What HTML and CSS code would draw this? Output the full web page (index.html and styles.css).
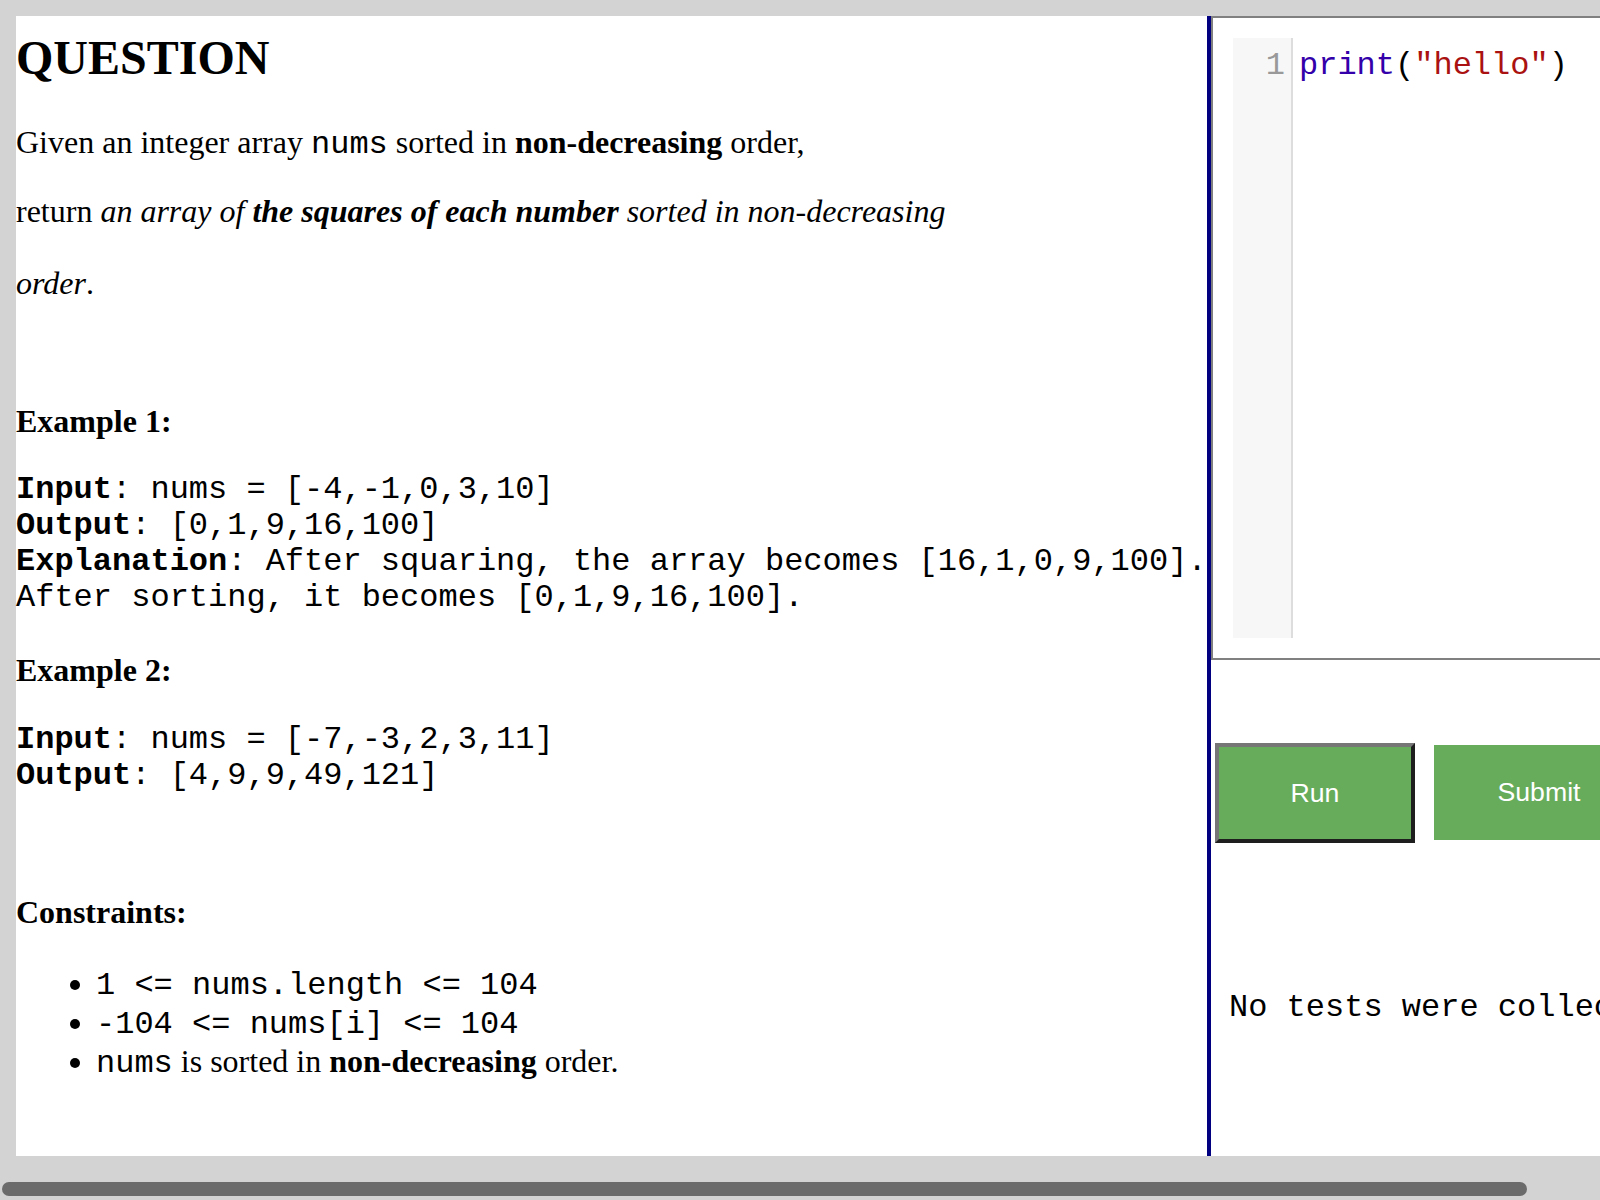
FILE: index.html
```html
<!DOCTYPE html>
<html lang="en">
<head>
<meta charset="utf-8">
<title>Question</title>
<link rel="stylesheet" href="styles.css">
</head>
<body>
<div class="app">
  <section class="question">
    <h1 class="title">QUESTION</h1>
    <p class="line-a">Given an integer array <code>nums</code> sorted in <strong>non-decreasing</strong> order,</p>
    <p class="line-b">return <em>an array of <strong>the squares of each number</strong> sorted in non-decreasing order</em>.</p>
    <p class="ex-head ex-head-1"><strong>Example 1:</strong></p>
    <pre class="ex-pre ex-pre-1"><strong>Input</strong>: nums = [-4,-1,0,3,10]
<strong>Output</strong>: [0,1,9,16,100]
<strong>Explanation</strong>: After squaring, the array becomes [16,1,0,9,100].
After sorting, it becomes [0,1,9,16,100].</pre>
    <p class="ex-head ex-head-2"><strong>Example 2:</strong></p>
    <pre class="ex-pre ex-pre-2"><strong>Input</strong>: nums = [-7,-3,2,3,11]
<strong>Output</strong>: [4,9,9,49,121]</pre>
    <p class="ex-head constraints-head"><strong>Constraints:</strong></p>
    <ul class="constraints">
      <li><code>1 &lt;= nums.length &lt;= 104</code></li>
      <li><code>-104 &lt;= nums[i] &lt;= 104</code></li>
      <li><code>nums</code> is sorted in <strong>non-decreasing</strong> order.</li>
    </ul>
  </section>
  <section class="workspace">
    <div class="editor">
      <div class="cm">
        <div class="gutter"><div class="ln">1</div></div>
        <div class="lines"><pre class="code-line"><span class="cm-builtin">print</span>(<span class="cm-string">"hello"</span>)</pre></div>
      </div>
    </div>
    <div class="actions">
      <button class="btn btn-run" type="button">Run</button>
      <button class="btn btn-submit" type="button">Submit</button>
    </div>
    <pre class="output">No tests were collected</pre>
  </section>
</div>
<div class="hscroll-thumb" aria-hidden="true"></div>
</body>
</html>
```

FILE: styles.css
```css
html {
  background: #d3d3d3;
  overflow: hidden;
}

body {
  margin: 0;
  padding: 16px;
  width: max-content;
  background: #d3d3d3;
  font-family: "Liberation Serif", "Times New Roman", serif;
  font-size: 32px;
  color: #000;
}

::-webkit-scrollbar {
  display: none;
}

/* overlay scrollbar thumb (macOS style) */
.hscroll-thumb {
  position: fixed;
  left: 2px;
  bottom: 4px;
  width: 1525px;
  height: 14px;
  border-radius: 7px;
  background: #6b6b6b;
}

.app {
  display: flex;
  height: 1140px;
  background: #fff;
}

/* ---------- question panel ---------- */
.question {
  flex: none;
  width: 1191px;
}

.question code,
.question pre {
  font-family: "Liberation Mono", "Courier New", monospace;
  font-size: 32px;
}

.title {
  margin: 14px 0 0;
  font-size: 48px;
  line-height: 56px;
  font-weight: bold;
}

.line-a {
  margin: 26px 0 0;
  line-height: 60px;
}

.line-b {
  margin: 0;
  max-width: 975px;
  line-height: 72px;
}

.ex-head {
  margin: 0;
  line-height: 37px;
}

.ex-head-1 {
  margin-top: 84px;
}

.ex-head-2 {
  margin-top: 36px;
}

.constraints-head {
  margin-top: 99.5px;
}

.ex-pre {
  margin: 32px 0 0;
  line-height: 36px;
  white-space: pre;
}

.ex-pre-2 {
  margin-top: 33px;
}

.constraints {
  margin: 34px 0 0;
  padding-left: 80px;
  line-height: 36px;
}

/* ---------- workspace panel ---------- */
.workspace {
  flex: none;
  width: 450px;
  border-left: 4px solid #000080;
  display: flex;
  flex-direction: column;
}

.editor {
  border: 2px solid #808080;
  padding: 20px;
}

.cm {
  display: flex;
  height: 600px;
  background: #fff;
  font-family: "Liberation Mono", "Courier New", monospace;
  font-size: 32px;
  line-height: 37px;
}

.gutter {
  flex: none;
  box-sizing: border-box;
  width: 60px;
  background: #f7f7f7;
  border-right: 2px solid #ddd;
  padding-top: 9px;
}

.ln {
  text-align: right;
  padding-right: 6px;
  color: #999;
}

.lines {
  flex: 1;
  padding-top: 9px;
}

.code-line {
  margin: 0;
  padding-left: 6px;
  font: inherit;
  white-space: pre;
}

.cm-builtin {
  color: #3300aa;
}

.cm-string {
  color: #aa1111;
}

.actions {
  display: flex;
  align-items: flex-start;
  margin-top: 83px;
  padding-left: 4px;
}

.btn {
  flex: none;
  box-sizing: border-box;
  width: 200px;
  margin: 0;
  padding: 0;
  background: #67ac5b;
  color: #fff;
  font-family: "Liberation Sans", Arial, sans-serif;
  font-size: 26.67px;
  text-align: center;
}

.btn-run {
  height: 100px;
  border: 4px solid;
  border-color: #767676 #1e1e1e #1e1e1e #767676;
}

.btn-submit {
  width: 210px;
  height: 95px;
  margin-top: 2px;
  margin-left: 19px;
  border: 0;
}

.output {
  margin: 147px 0 0;
  padding-left: 18px;
  font-family: "Liberation Mono", "Courier New", monospace;
  font-size: 32px;
  line-height: 36px;
  white-space: pre;
}
```
